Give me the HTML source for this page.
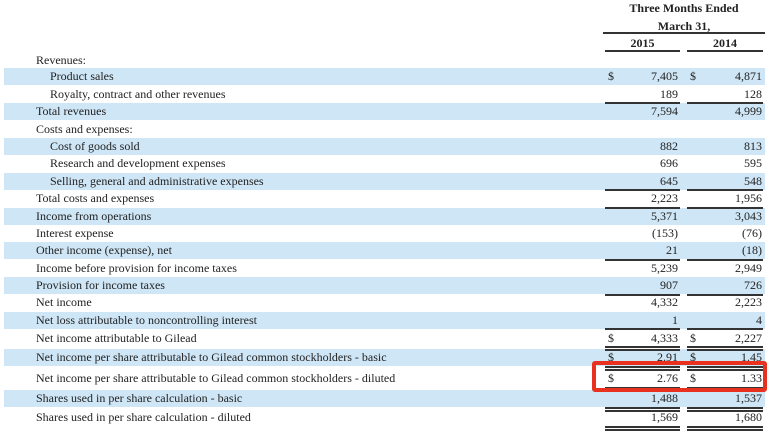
<!DOCTYPE html><html><head><style>
body{margin:0;width:770px;height:431px;background:#fff;position:relative;overflow:hidden;font-family:"Liberation Serif",serif;font-size:12px;color:#222}
.b{position:absolute;left:4px;width:761px;background:#cfe6f6}
.t{position:absolute;white-space:nowrap;line-height:14px}
.v{position:absolute;text-align:right;line-height:14px}
.l{position:absolute;height:2px;background:#333}
.h{position:absolute;font-weight:bold;text-align:center;line-height:14px}
</style></head><body>
<div class="h" style="left:603px;width:162px;top:1px">Three Months Ended</div>
<div class="h" style="left:603px;width:162px;top:19px">March 31,</div>
<div class="l" style="left:603px;width:162px;top:32px"></div>
<div class="h" style="left:605px;width:75px;top:36px">2015</div>
<div class="h" style="left:687px;width:76px;top:36px">2014</div>
<div class="l" style="left:605px;width:75px;top:50px"></div>
<div class="l" style="left:687px;width:76px;top:50px"></div>
<div id="rows"></div>
<script>
var r=[["Revenues:",0,"","",60],["Product sales",1,"7,405","4,871",76,1],["Royalty, contract and other revenues",1,"189","128",94],["Total revenues",0,"7,594","4,999",111],["Costs and expenses:",0,"","",129],["Cost of goods sold",1,"882","813",146],["Research and development expenses",1,"696","595",163],["Selling, general and administrative expenses",1,"645","548",181],["Total costs and expenses",0,"2,223","1,956",198],["Income from operations",0,"5,371","3,043",216],["Interest expense",0,"(153)","(76)",233],["Other income (expense), net",0,"21","(18)",250],["Income before provision for income taxes",0,"5,239","2,949",268],["Provision for income taxes",0,"907","726",285],["Net income",0,"4,332","2,223",302],["Net loss attributable to noncontrolling interest",0,"1","4",320],["Net income attributable to Gilead",0,"4,333","2,227",338,1],["Net income per share attributable to Gilead common stockholders - basic",0,"2.91","1.45",357,1],["Net income per share attributable to Gilead common stockholders - diluted",0,"2.76","1.33",378,1],["Shares used in per share calculation - basic",0,"1,488","1,537",398],["Shares used in per share calculation - diluted",0,"1,569","1,680",417]];
var h="";
r.forEach(function(x,i){var c=x[4];
if(i%2==1)h+='<div class="b" style="top:'+(c-8)+'px;height:17px"></div>';
h+='<div class="t" style="left:'+(x[1]?50:36)+'px;top:'+(c-7)+'px">'+x[0]+'</div>';
if(x[2]){h+='<div class="v" style="left:605px;width:73px;top:'+(c-7)+'px">'+x[2]+'</div><div class="v" style="left:687px;width:75px;top:'+(c-7)+'px">'+x[3]+'</div>';}
if(x[5])h+='<div class="t" style="left:608px;top:'+(c-7)+'px">$</div><div class="t" style="left:690px;top:'+(c-7)+'px">$</div>';});
function L(y,d){h+='<div class="l" style="left:605px;width:75px;top:'+y+'px"></div><div class="l" style="left:687px;width:76px;top:'+y+'px"></div>';if(d)L(y+3,0);}
L(102);L(189);L(207);L(259);L(294);L(328);L(346,1);L(366,1);L(387,1);L(407,1);L(426,1);
h+='<div style="position:absolute;left:592px;top:361px;width:167px;height:23px;border:4px solid #e8321f;border-radius:3px"></div>';
document.getElementById("rows").innerHTML=h;
</script>
</body></html>
